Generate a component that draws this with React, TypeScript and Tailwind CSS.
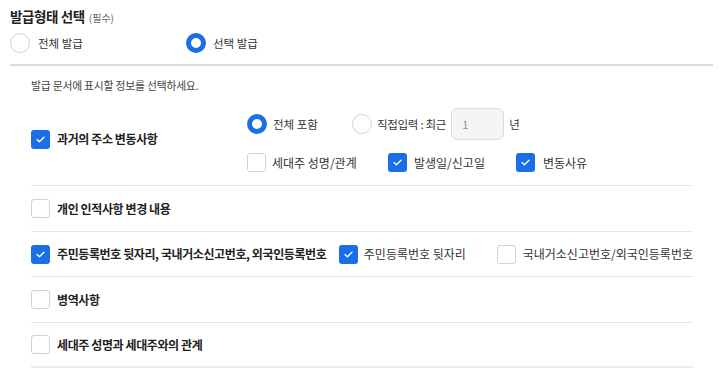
import React, { useState } from 'react';

const FONT = "font-['Noto_Sans_CJK_KR','Noto_Sans',sans-serif]";

const Radio = ({ checked, onClick }: { checked: boolean; onClick?: () => void }) => (
  <span
    onClick={onClick}
    className={`inline-block w-[20px] h-[20px] rounded-full shrink-0 cursor-pointer ${
      checked ? 'border-[5px] border-[#1a6fe8] bg-white' : 'border border-[#cfd3d9] bg-white'
    }`}
  />
);

const Check = ({ checked, onClick }: { checked: boolean; onClick?: () => void }) => (
  <span
    onClick={onClick}
    className={`inline-flex items-center justify-center w-[19px] h-[19px] rounded-[3px] shrink-0 cursor-pointer ${
      checked ? 'bg-[#1a6fe8]' : 'border border-[#cfd3d9] bg-white'
    }`}
  >
    {checked && (
      <svg width="9" height="7" viewBox="0 0 9 7" fill="none">
        <path d="M1 3.6 L3.4 5.8 L8 1.2" stroke="white" strokeWidth="1.4" strokeLinecap="round" strokeLinejoin="round" />
      </svg>
    )}
  </span>
);

export default function App() {
  const [issueAll, setIssueAll] = useState(false);
  const [checks, setChecks] = useState<Record<string, boolean>>({
    addr: true,
    head: false,
    date: true,
    reason: true,
    personal: false,
    rrn: true,
    rrnBack: true,
    foreign: false,
    military: false,
    relation: false,
  });
  const [range, setRange] = useState<'all' | 'custom'>('all');
  const toggle = (k: string) => setChecks((c) => ({ ...c, [k]: !c[k] }));

  return (
    <div className={`${FONT} w-[720px] h-[373px] bg-white overflow-hidden text-[#222]`}>
      <div className="pl-[10px] pr-[7px] pt-[6px]">
        {/* 발급형태 */}
        <div className="flex items-baseline gap-[4px]">
          <span className="text-[13.5px] font-bold tracking-[-0.4px]">발급형태 선택</span>
          <span className="text-[10px] text-[#666]">(필수)</span>
        </div>
        <div className="flex items-center h-[28px] mt-[3px]">
          <label className="flex items-center gap-[8px] w-[176px]" onClick={() => setIssueAll(true)}>
            <Radio checked={issueAll} />
            <span className="text-[11.5px] text-[#333]">전체 발급</span>
          </label>
          <label className="flex items-center gap-[7px]" onClick={() => setIssueAll(false)}>
            <Radio checked={!issueAll} />
            <span className="text-[11.5px] text-[#333]">선택 발급</span>
          </label>
        </div>
        <div className="h-[2px] bg-[#d8dbe1] mt-[7px]" />
      </div>

      <div className="pl-[31px] pr-[27px]">
        <p className="text-[10.8px] text-[#444] mt-[11px] tracking-[-0.2px]">발급 문서에 표시할 정보를 선택하세요.</p>

        {/* 과거의 주소 변동사항 */}
        <div className="flex h-[93px] border-b border-[#e6e8ec]">
          <label className="flex items-center gap-[7px] w-[216px] self-center">
            <Check checked={checks.addr} onClick={() => toggle('addr')} />
            <span className="text-[12px] font-bold tracking-[-0.4px]">과거의 주소 변동사항</span>
          </label>
          <div className="flex flex-col gap-[13px] pt-[15px]">
            <div className="flex items-center h-[32px]">
              <label className="flex items-center gap-[6px] w-[105px]">
                <Radio checked={range === 'all'} onClick={() => setRange('all')} />
                <span className="text-[11.5px] text-[#333]">전체 포함</span>
              </label>
              <label className="flex items-center gap-[5px]">
                <Radio checked={range === 'custom'} onClick={() => setRange('custom')} />
                <span className="text-[11.5px] text-[#333] tracking-[-0.3px]">직접입력 : 최근</span>
              </label>
              <input
                defaultValue="1"
                className="ml-[5px] w-[53px] h-[32px] rounded-[6px] border border-[#d9dce1] bg-[#f4f5f7] px-[10px] text-[11px] text-[#8a8f96] outline-none"
              />
              <span className="ml-[5px] text-[11.5px] text-[#333]">년</span>
            </div>
            <div className="flex items-center">
              <label className="flex items-center gap-[6px] w-[141px]">
                <Check checked={checks.head} onClick={() => toggle('head')} />
                <span className="text-[12px] text-[#333]">세대주 성명/관계</span>
              </label>
              <label className="flex items-center gap-[7px] w-[128px]">
                <Check checked={checks.date} onClick={() => toggle('date')} />
                <span className="text-[12px] text-[#333]">발생일/신고일</span>
              </label>
              <label className="flex items-center gap-[8px]">
                <Check checked={checks.reason} onClick={() => toggle('reason')} />
                <span className="text-[12px] text-[#333]">변동사유</span>
              </label>
            </div>
          </div>
        </div>

        {/* 개인 인적사항 */}
        <div className="flex items-center h-[45.5px] border-b border-[#e6e8ec]">
          <label className="flex items-center gap-[7px]">
            <Check checked={checks.personal} onClick={() => toggle('personal')} />
            <span className="text-[12px] font-bold tracking-[-0.4px]">개인 인적사항 변경 내용</span>
          </label>
        </div>

        {/* 주민등록번호 */}
        <div className="flex items-center h-[45.5px] border-b border-[#e6e8ec]">
          <label className="flex items-center gap-[7px] w-[308px]">
            <Check checked={checks.rrn} onClick={() => toggle('rrn')} />
            <span className="text-[12px] font-bold tracking-[-0.4px] whitespace-nowrap">
              주민등록번호 뒷자리, 국내거소신고번호, 외국인등록번호
            </span>
          </label>
          <label className="flex items-center gap-[6px] w-[158px]">
            <Check checked={checks.rrnBack} onClick={() => toggle('rrnBack')} />
            <span className="text-[12px] text-[#333]">주민등록번호 뒷자리</span>
          </label>
          <label className="flex items-center gap-[7px]">
            <Check checked={checks.foreign} onClick={() => toggle('foreign')} />
            <span className="text-[12px] text-[#333] whitespace-nowrap">국내거소신고번호/외국인등록번호</span>
          </label>
        </div>

        {/* 병역사항 */}
        <div className="flex items-center h-[45.5px] border-b border-[#e6e8ec]">
          <label className="flex items-center gap-[7px]">
            <Check checked={checks.military} onClick={() => toggle('military')} />
            <span className="text-[12px] font-bold tracking-[-0.4px]">병역사항</span>
          </label>
        </div>

        {/* 세대주 관계 */}
        <div className="flex items-center h-[45.5px] border-b-2 border-[#e9ebef]">
          <label className="flex items-center gap-[7px]">
            <Check checked={checks.relation} onClick={() => toggle('relation')} />
            <span className="text-[12px] font-bold tracking-[-0.4px]">세대주 성명과 세대주와의 관계</span>
          </label>
        </div>
      </div>
    </div>
  );
}
